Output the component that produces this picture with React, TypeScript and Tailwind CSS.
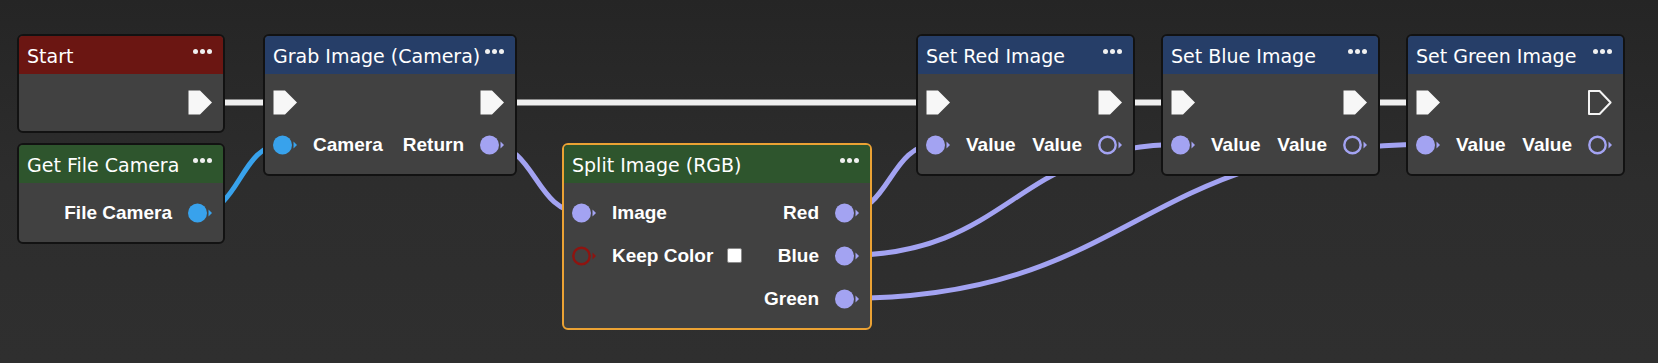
import React from "react";

const PURPLE = "#a3a3f2";
const BLUE = "#38a2ec";

function DataPin({ color, hollow }: { color: string; hollow?: boolean }) {
  return (
    <svg width="24" height="20" viewBox="0 0 24 20" className="shrink-0">
      {hollow ? (
        <circle cx="9.5" cy="10" r="8.2" fill="none" stroke={color} strokeWidth="2.4" />
      ) : (
        <circle cx="9.5" cy="10" r="9.5" fill={color} />
      )}
      <path d="M20.5 6.5 L24 10 L20.5 13.5 Z" fill={color} />
    </svg>
  );
}

function ExecPin({ hollow }: { hollow?: boolean }) {
  return (
    <svg width="24" height="25" viewBox="0 0 24 25" className="shrink-0">
      {hollow ? (
        <path d="M1 1 H11.6 L22.6 12.5 L11.6 24 H1 Z" fill="none" stroke="#f4f4f4" strokeWidth="2" strokeLinejoin="round" />
      ) : (
        <path d="M0.5 0.5 H12 L24 12.5 L12 24.5 H0.5 Z" fill="#f7f7f7" strokeLinejoin="round" />
      )}
    </svg>
  );
}

function Dots() {
  return (
    <svg width="19" height="5" viewBox="0 0 19 5" className="shrink-0 self-start mt-[13px]">
      <circle cx="2.5" cy="2.5" r="2.5" fill="#f0f0f0" />
      <circle cx="9.5" cy="2.5" r="2.5" fill="#f0f0f0" />
      <circle cx="16.5" cy="2.5" r="2.5" fill="#f0f0f0" />
    </svg>
  );
}

function Header({ title, color }: { title: string; color: string }) {
  return (
    <div className={`h-[38px] flex items-center justify-between pl-2 pr-[11px] ${color}`}>
      <span className="text-[19px] text-white leading-none pt-[3px] font-['DejaVu_Sans',sans-serif] whitespace-nowrap">{title}</span>
      <Dots />
    </div>
  );
}

function Label({ children }: { children: React.ReactNode }) {
  return (
    <span className="text-[19px] font-bold text-white leading-none font-['Liberation_Sans',Arial,sans-serif] whitespace-nowrap">
      {children}
    </span>
  );
}

function ExecRow({ left, right, rightHollow }: { left?: boolean; right?: boolean; rightHollow?: boolean }) {
  return (
    <div className="h-[41px] flex items-center justify-between">
      {left ? <ExecPin /> : <span />}
      {right ? <ExecPin hollow={rightHollow} /> : <span />}
    </div>
  );
}

export default function App() {
  const link = (x1: number, y1: number, x2: number, y2: number) => {
    const d = Math.abs(x2 - x1) * 0.5;
    return `M${x1} ${y1} C${x1 + d} ${y1}, ${x2 - d} ${y2}, ${x2} ${y2}`;
  };

  return (
    <div className="relative w-[1658px] h-[363px] overflow-hidden bg-gradient-to-b from-[#252525] via-[#2d2d2d] to-[#2f2f2f]">
      <svg className="absolute inset-0" width="1658" height="363">
        <g stroke="#eeeeee" strokeWidth="6" fill="none">
          <line x1="200" y1="102.5" x2="285" y2="102.5" />
          <line x1="492" y1="102.5" x2="938" y2="102.5" />
          <line x1="1110" y1="102.5" x2="1183" y2="102.5" />
          <line x1="1355" y1="102.5" x2="1428" y2="102.5" />
        </g>
        <g fill="none" strokeWidth="5">
          <path d={link(197.5, 212.5, 282.5, 144.5)} stroke={BLUE} />
          <path d={link(489.5, 144.5, 581.5, 212.5)} stroke={PURPLE} />
          <path d={link(844.5, 212.5, 935.5, 144.5)} stroke={PURPLE} />
          <path d={link(844.5, 255.5, 1180.5, 144.5)} stroke={PURPLE} />
          <path d={link(844.5, 298.5, 1425.5, 144.5)} stroke={PURPLE} />
        </g>
      </svg>

      {/* Start */}
      <div className="absolute left-[17px] top-[34px] w-[208px] rounded-md border-2 border-[#121212] bg-[#414141] overflow-hidden">
        <Header title="Start" color="bg-[#6b1612]" />
        <div className="pt-2 pb-2 pl-2 pr-[11px]">
          <ExecRow right />
        </div>
      </div>

      {/* Get File Camera */}
      <div className="absolute left-[17px] top-[143px] w-[208px] rounded-md border-2 border-[#121212] bg-[#414141] overflow-hidden">
        <Header title="Get File Camera" color="bg-[#2e552d]" />
        <div className="pt-2 pb-2 pl-2 pr-[11px]">
          <div className="h-[43px] flex items-center justify-end gap-4">
            <Label>File Camera</Label>
            <DataPin color={BLUE} />
          </div>
        </div>
      </div>

      {/* Grab Image */}
      <div className="absolute left-[263px] top-[34px] w-[254px] rounded-md border-2 border-[#121212] bg-[#414141] overflow-hidden">
        <Header title="Grab Image (Camera)" color="bg-[#263e68]" />
        <div className="pt-2 pb-2 pl-2 pr-[11px]">
          <ExecRow left right />
          <div className="h-[43px] flex items-center justify-between">
            <div className="flex items-center gap-4">
              <DataPin color={BLUE} />
              <Label>Camera</Label>
            </div>
            <div className="flex items-center gap-4">
              <Label>Return</Label>
              <DataPin color={PURPLE} />
            </div>
          </div>
        </div>
      </div>

      {/* Split Image */}
      <div className="absolute left-[562px] top-[143px] w-[310px] rounded-md border-2 border-[#eba234] bg-[#414141] overflow-hidden">
        <Header title="Split Image (RGB)" color="bg-[#2e552d]" />
        <div className="pt-2 pb-2 pl-2 pr-[11px]">
          <div className="h-[43px] flex items-center justify-between">
            <div className="flex items-center gap-4">
              <DataPin color={PURPLE} />
              <Label>Image</Label>
            </div>
            <div className="flex items-center gap-4">
              <Label>Red</Label>
              <DataPin color={PURPLE} />
            </div>
          </div>
          <div className="h-[43px] flex items-center justify-between">
            <div className="flex items-center gap-4">
              <DataPin color="#8e1410" hollow />
              <Label>Keep Color</Label>
              <span className="w-[15px] h-[15px] -ml-[2px] rounded-[2px] bg-white border border-[#8a8a8a]" />
            </div>
            <div className="flex items-center gap-4">
              <Label>Blue</Label>
              <DataPin color={PURPLE} />
            </div>
          </div>
          <div className="h-[43px] flex items-center justify-end gap-4">
            <Label>Green</Label>
            <DataPin color={PURPLE} />
          </div>
        </div>
      </div>

      {/* Set Red / Blue / Green */}
      {[
        { t: "Set Red Image", c: "left-[916px]", last: false },
        { t: "Set Blue Image", c: "left-[1161px]", last: false },
        { t: "Set Green Image", c: "left-[1406px]", last: true },
      ].map((n) => (
        <div key={n.t} className={`absolute ${n.c} top-[34px] w-[219px] rounded-md border-2 border-[#121212] bg-[#414141] overflow-hidden`}>
          <Header title={n.t} color="bg-[#263e68]" />
          <div className="pt-2 pb-2 pl-2 pr-[11px]">
            <ExecRow left right rightHollow={n.last} />
            <div className="h-[43px] flex items-center justify-between">
              <div className="flex items-center gap-4">
                <DataPin color={PURPLE} />
                <Label>Value</Label>
              </div>
              <div className="flex items-center gap-4">
                <Label>Value</Label>
                <DataPin color={PURPLE} hollow />
              </div>
            </div>
          </div>
        </div>
      ))}
    </div>
  );
}
